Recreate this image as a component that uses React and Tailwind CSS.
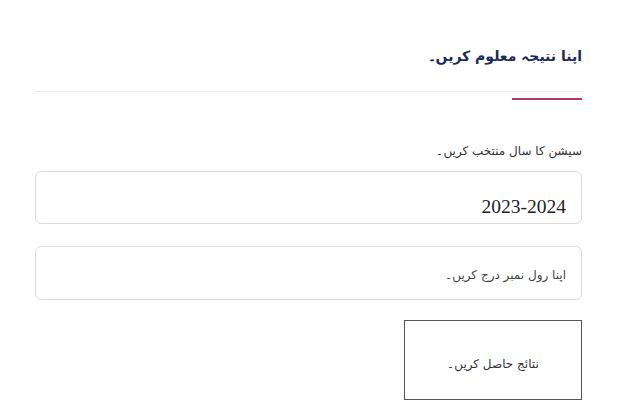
import React from "react";

const urdu = { fontFamily: '"DejaVu Sans", sans-serif' };

const App = () => {
  return (
    <div className="bg-white min-h-screen w-[621px]" dir="rtl">
      <div className="ml-[35px] mr-[39px] pt-[42px]">
        {/* heading */}
        <h2
          className="text-[14px] font-bold text-[#1c2a5c] leading-[28px] h-[28px]"
          style={urdu}
        >
          اپنا نتیجہ معلوم کریں۔
        </h2>
        <div className="mt-[21px] border-t border-[#ececec]"></div>
        <div className="mt-[6px] w-[70px] h-[2px] bg-[#b23a5c]"></div>

        {/* session */}
        <label
          className="block mt-[39px] text-[12px] text-[#333] leading-[24px]"
          style={urdu}
        >
          سیشن کا سال منتخب کریں۔
        </label>
        <div className="mt-[8px] h-[53px] border border-[#dcdcdc] rounded-[6px] flex items-end pb-[4px] px-[15px]">
          <span className="text-[19.5px] text-[#222] font-['Liberation_Serif',serif] leading-[24px]">
            2023-2024
          </span>
        </div>

        {/* roll number */}
        <div className="mt-[22px] h-[54px] border border-[#dcdcdc] rounded-[6px] flex items-center pt-[3px] px-[15px]">
          <span className="text-[12px] text-[#444]" style={urdu}>
            اپنا رول نمبر درج کریں۔
          </span>
        </div>

        {/* button */}
        <button
          className="mt-[20px] w-[178px] h-[80px] border border-[#555] bg-white flex items-center justify-center pt-[8px] text-[12px] text-[#333]"
          style={urdu}
        >
          نتائج حاصل کریں۔
        </button>
      </div>
    </div>
  );
};

export default App;
